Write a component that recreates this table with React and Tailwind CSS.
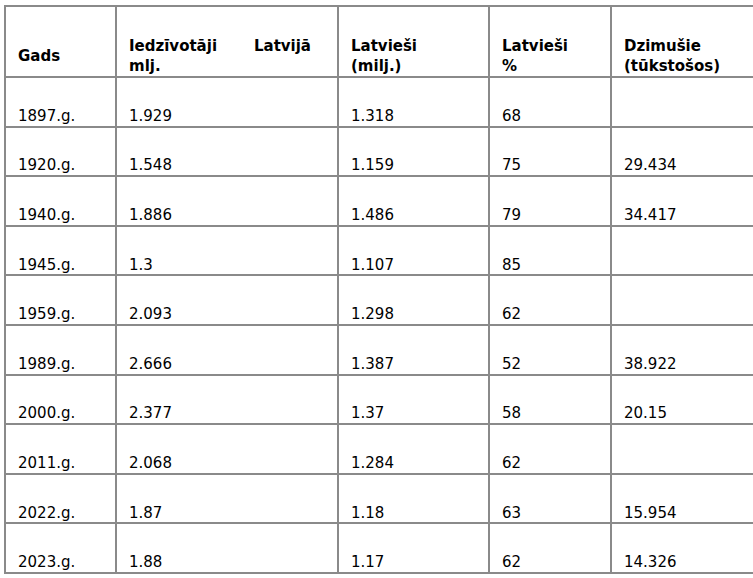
import React from 'react';

// Latvian population table
const ROWS = [
    ['1897.g.', '1.929', '1.318', '68', ''],
    ['1920.g.', '1.548', '1.159', '75', '29.434'],
    ['1940.g.', '1.886', '1.486', '79', '34.417'],
    ['1945.g.', '1.3', '1.107', '85', ''],
    ['1959.g.', '2.093', '1.298', '62', ''],
    ['1989.g.', '2.666', '1.387', '52', '38.922'],
    ['2000.g.', '2.377', '1.37', '58', '20.15'],
    ['2011.g.', '2.068', '1.284', '62', ''],
    ['2022.g.', '1.87', '1.18', '63', '15.954'],
    ['2023.g.', '1.88', '1.17', '62', '14.326'],
];

function Cell({ children, head }) {
    return (
        <div
            className={
                'flex flex-col justify-center border-r-2 border-b-2 border-[#8a8a8a] pt-[28px] px-[12px] text-[15px] leading-[20px] text-black ' +
                (head ? 'font-bold' : '')
            }
        >
            {children}
        </div>
    );
}

export default function App() {
    return (
        <div className="w-[753px] h-[578px] overflow-hidden bg-white pt-[5px] pl-[4px]"
            style={{ fontFamily: '"DejaVu Sans", Verdana, sans-serif' }}>
            <div className="w-[880px] grid grid-cols-[111px_222px_151px_122px_1fr] grid-rows-[71px_repeat(10,49.6px)] border-l-2 border-t-2 border-[#8a8a8a]">
                <Cell head><div>Gads</div></Cell>
                <Cell head>
                    <div className="flex justify-between w-[182px]">
                        <span>Iedzīvotāji</span>
                        <span>Latvijā</span>
                    </div>
                    <div>mlj.</div>
                </Cell>
                <Cell head>
                    <div>Latvieši</div>
                    <div>(milj.)</div>
                </Cell>
                <Cell head>
                    <div>Latvieši</div>
                    <div>%</div>
                </Cell>
                <Cell head>
                    <div>Dzimušie</div>
                    <div>(tūkstošos)</div>
                </Cell>

                {ROWS.map(row =>
                    row.map((v, i) => (
                        <Cell key={row[0] + i}>
                            <div className="min-h-[20px]">{v}</div>
                        </Cell>
                    ))
                )}
            </div>
        </div>
    );
}
